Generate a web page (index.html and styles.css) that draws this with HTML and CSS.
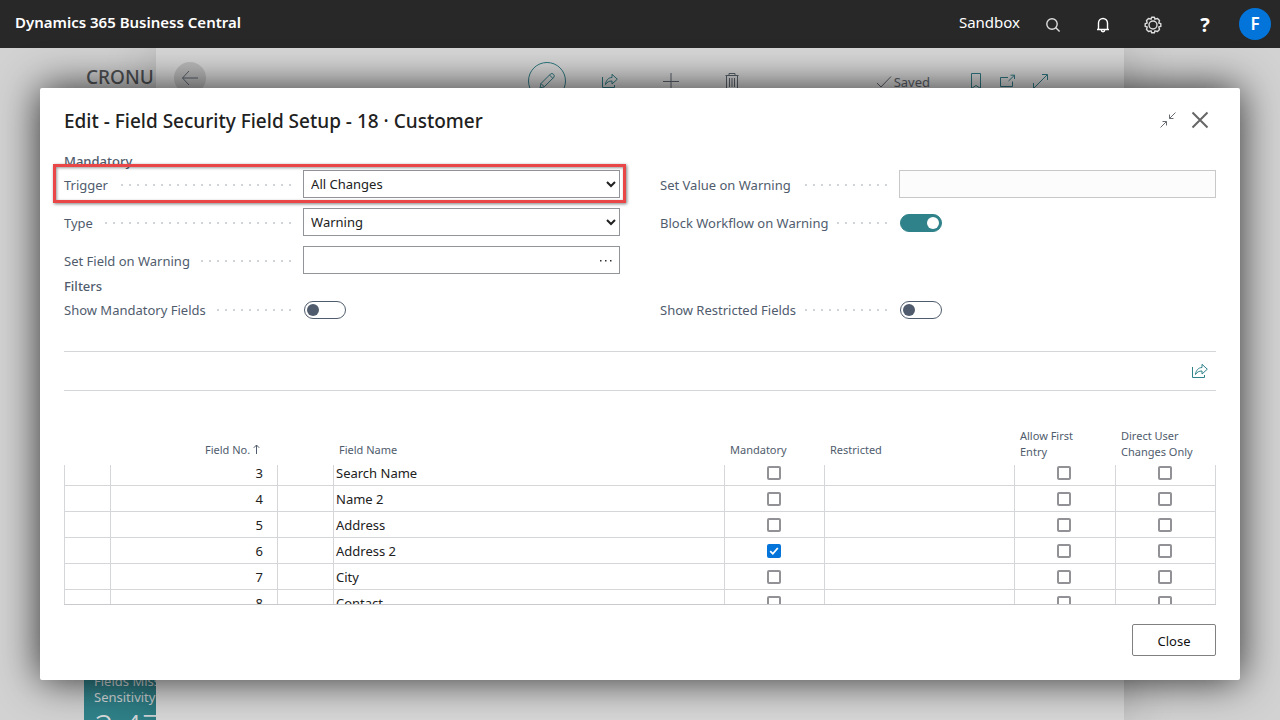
FILE: index.html
```html
<!DOCTYPE html>
<html lang="en">
<head>
<meta charset="utf-8">
<meta name="viewport" content="width=device-width, initial-scale=1">
<title>Dynamics 365 Business Central</title>
<link rel="stylesheet" href="styles.css">
</head>
<body>
<header class="topbar">
  <span class="brand">Dynamics 365 Business Central</span>
  <span class="env">Sandbox</span>
  <nav class="tools">
    <button type="button" aria-label="Search"><svg width="16" height="16" viewBox="0 0 16 16"><circle cx="7" cy="7" r="5.2"/><path d="M10.8 10.8L14.6 14.6"/></svg></button>
    <button type="button" aria-label="Notifications"><svg class="strong" width="16" height="16" viewBox="0 0 16 16"><path d="M3.5 12.2V6a4.5 4.5 0 0 1 9 0v6.200M2 12.500h12M6.300 13a1.700 1.700 0 0 0 3.400 0"/></svg></button>
    <button type="button" aria-label="Settings"><svg width="18" height="18" viewBox="0 0 18 18"><circle cx="9" cy="9" r="4"/><path d="M7.600 1.200H10.400L11 3.200L13.500 2.500L15.500 4.500L14.800 7L16.800 7.600V10.400L14.800 11L15.500 13.500L13.500 15.500L11 14.800L10.400 16.800H7.600L7 14.800L4.500 15.500L2.500 13.500L3.200 11L1.200 10.400V7.600L3.200 7L2.500 4.500L4.500 2.500L7 3.200Z" stroke-linejoin="round"/></svg></button>
    <button type="button" class="help" aria-label="Help">?</button>
  </nav>
  <button type="button" class="avatar" aria-label="Account">F</button>
</header>

<main class="stage">
  <div class="backdrop">
    <aside class="side">
      <div class="company">CRONU</div>
      <div class="tile">
        <div class="tile-label">Fields Miss</div>
        <div class="tile-label">Sensitivity</div>
        <div class="tile-value">2,47</div>
      </div>
    </aside>
    <div class="sheet">
      <div class="sheet-bar">
        <button type="button" class="back" aria-label="Back"><svg width="18" height="16" viewBox="0 0 18 16"><path d="M8 1L1.500 8L8 15M1.500 8H17"/></svg></button>
        <div class="actions">
          <button type="button" class="edit" aria-label="Edit"><svg width="18" height="18" viewBox="0 0 18 18"><path d="M2 16L3 11.500L12.500 2Q14 .8 15.500 2.300T15.800 5.300L6.300 14.800ZM3 11.500L6.300 14.800M11.500 3L14.800 6.300"/></svg></button>
          <button type="button" aria-label="Share"><svg width="18" height="16" viewBox="0 0 18 16"><path d="M1.500 4V14.500H13.500V12M4.500 11.500C5 7 7.500 4.700 11 4.500V1.300L16.300 6.200L11 11V8C8 8 6 9 4.500 11.500Z"/></svg></button>
          <button type="button" class="muted" aria-label="New"><svg width="18" height="16" viewBox="0 0 18 16"><path d="M9 0V16M1 8.500H17"/></svg></button>
          <button type="button" class="muted" aria-label="Delete"><svg width="16" height="18" viewBox="0 0 16 18"><path d="M1.500 3.500H14.500M5 3.500V1.500H11V3.500M2.500 3.500V17.500H13.500V3.500M5.500 6V15M8 6V15M10.500 6V15"/></svg></button>
        </div>
        <div class="state">
          <svg width="16" height="14" viewBox="0 0 16 14"><path d="M1 8L5 12L15 1.500"/></svg><span>Saved</span>
        </div>
        <div class="page-icons">
          <svg width="14" height="18" viewBox="0 0 14 18"><path d="M2.500 1.500H11.500V16.500L7 13.500L2.500 16.500Z"/></svg>
          <svg width="17" height="14" viewBox="0 0 17 14"><path d="M9 3.500H1.500V12.500H13.500V7.500M9.500 7L15.500 1.200M11.500 1.200H15.500V5"/></svg>
          <svg width="17" height="17" viewBox="0 0 17 17"><path d="M2 15L15 2M10 1.500H15.500V7M1.500 10V15.500H7"/></svg>
        </div>
      </div>
    </div>
  </div>

  <section class="dialog" role="dialog" aria-labelledby="dialog-title">
    <div class="dialog-head">
      <h1 id="dialog-title">Edit - Field Security Field Setup - 18 · Customer</h1>
      <button type="button" class="icon-btn" aria-label="Restore size"><svg width="18" height="18" viewBox="0 0 18 18"><path d="M1.500 16.500L7.500 10.500M3.500 10.500H7.500V14.500M16.500 1.500L10.500 7.500M10.500 3.500V7.500H14.500"/></svg></button>
      <button type="button" class="icon-btn close-x" aria-label="Close dialog"><svg width="18" height="18" viewBox="0 0 18 18"><path d="M1.500 1.500L16.500 16.500M16.500 1.500L1.500 16.500"/></svg></button>
    </div>

    <form class="fields">
      <h2>Mandatory</h2>
      <div class="columns">
        <div class="field highlighted"><label for="trigger">Trigger</label><i class="dots"></i><select id="trigger" class="control"><option>All Changes</option></select></div>
        <div class="field"><label for="setvalue">Set Value on Warning</label><i class="dots"></i><input id="setvalue" class="control" type="text" disabled></div>
        <div class="field"><label for="type">Type</label><i class="dots"></i><select id="type" class="control"><option>Warning</option></select></div>
        <div class="field"><label for="block">Block Workflow on Warning</label><i class="dots"></i><div class="slot"><input id="block" class="switch" type="checkbox" role="switch" checked></div></div>
        <div class="field"><label for="setfield">Set Field on Warning</label><i class="dots"></i><div class="control lookup"><input id="setfield" type="text"><button type="button" aria-label="Choose a field"><svg width="14" height="4" viewBox="0 0 14 4"><path d="M1 1h1.500v1.500H1zM6 1h1.500v1.500H6zM11 1h1.500v1.500H11z"/></svg></button></div></div>
      </div>
      <h2 class="filters">Filters</h2>
      <div class="columns">
        <div class="field"><label for="showmand">Show Mandatory Fields</label><i class="dots"></i><div class="slot"><input id="showmand" class="switch" type="checkbox" role="switch"></div></div>
        <div class="field"><label for="showrest">Show Restricted Fields</label><i class="dots"></i><div class="slot"><input id="showrest" class="switch" type="checkbox" role="switch"></div></div>
      </div>
    </form>

    <div class="list-bar">
      <button type="button" class="icon-btn share" aria-label="Share list"><svg width="18" height="16" viewBox="0 0 18 16"><path d="M1.500 4V14.500H13.500V12M4.500 11.500C5 7 7.500 4.700 11 4.500V1.300L16.300 6.200L11 11V8C8 8 6 9 4.500 11.500Z"/></svg></button>
    </div>

    <div class="grid">
      <table>
        <colgroup><col class="c-mark"><col class="c-no"><col class="c-menu"><col><col class="c-mand"><col class="c-rest"><col class="c-allow"><col class="c-direct"></colgroup>
        <thead>
          <tr><th></th><th class="no">Field No. <svg width="7" height="10" viewBox="0 0 7 10"><path d="M3.500 10V1M.8 3.800L3.500 1L6.200 3.800"/></svg></th><th></th><th>Field Name</th><th>Mandatory</th><th>Restricted</th><th class="two-line">Allow First<br>Entry</th><th class="two-line">Direct User<br>Changes Only</th></tr>
        </thead>
        <tbody>
          <tr class="partial"><td></td><td class="no">3</td><td></td><td>Search Name</td><td class="tick"><input type="checkbox" aria-label="Mandatory"></td><td></td><td class="tick"><input type="checkbox" aria-label="Allow first entry"></td><td class="tick"><input type="checkbox" aria-label="Direct user changes only"></td></tr>
          <tr><td></td><td class="no">4</td><td></td><td>Name 2</td><td class="tick"><input type="checkbox" aria-label="Mandatory"></td><td></td><td class="tick"><input type="checkbox" aria-label="Allow first entry"></td><td class="tick"><input type="checkbox" aria-label="Direct user changes only"></td></tr>
          <tr><td></td><td class="no">5</td><td></td><td>Address</td><td class="tick"><input type="checkbox" aria-label="Mandatory"></td><td></td><td class="tick"><input type="checkbox" aria-label="Allow first entry"></td><td class="tick"><input type="checkbox" aria-label="Direct user changes only"></td></tr>
          <tr><td></td><td class="no">6</td><td></td><td>Address 2</td><td class="tick"><input type="checkbox" aria-label="Mandatory" checked></td><td></td><td class="tick"><input type="checkbox" aria-label="Allow first entry"></td><td class="tick"><input type="checkbox" aria-label="Direct user changes only"></td></tr>
          <tr><td></td><td class="no">7</td><td></td><td>City</td><td class="tick"><input type="checkbox" aria-label="Mandatory"></td><td></td><td class="tick"><input type="checkbox" aria-label="Allow first entry"></td><td class="tick"><input type="checkbox" aria-label="Direct user changes only"></td></tr>
          <tr><td></td><td class="no">8</td><td></td><td>Contact</td><td class="tick"><input type="checkbox" aria-label="Mandatory"></td><td></td><td class="tick"><input type="checkbox" aria-label="Allow first entry"></td><td class="tick"><input type="checkbox" aria-label="Direct user changes only"></td></tr>
        </tbody>
      </table>
    </div>

    <footer class="dialog-foot"><button type="button" class="close-btn">Close</button></footer>
  </section>
</main>
</body>
</html>
```
FILE: styles.css
```css
* { box-sizing: border-box; }

body {
  margin: 0;
  height: 100vh;
  display: flex;
  flex-direction: column;
  overflow: hidden;
  font: 13px/20px "Noto Sans", "Open Sans", sans-serif;
  color: #212121;
  background: #d2d2d2;
}

button { font: inherit; color: inherit; border: 0; padding: 0; background: none; cursor: pointer; }
svg { display: block; fill: none; stroke: currentColor; }

/* Top bar */
.topbar {
  display: flex;
  align-items: center;
  height: 48px;
  padding: 0 9px 0 15px;
  color: #fff;
  background: #282828;
}
.brand { flex: 1; font-size: 15px; font-weight: 600; padding-bottom: 4px; }
.env { font-size: 15px; padding-bottom: 4px; margin-right: 8px; }
.tools { display: flex; }
.tools button { width: 50px; height: 48px; display: grid; place-items: center; padding-top: 2px; color: #ddd; }
.tools svg { stroke-width: 1.4; }
.tools .strong { color: #fff; }
.tools .help { width: 54px; color: #fff; font-size: 20px; font-weight: 700; }
.avatar { width: 32px; height: 32px; margin-left: 7px; border-radius: 50%; background: #0375da; color: #fff; font-size: 17px; font-weight: 600; }

/* Page behind the dialog */
.stage { position: relative; flex: 1; min-height: 0; }
.backdrop { height: 100%; display: flex; padding-right: 156px; overflow: hidden; }
.side { width: 156px; padding: 17px 0 0 84px; display: flex; flex-direction: column; justify-content: space-between; overflow: hidden; }
.company { padding-left: 2px; font-size: 19px; line-height: 24px; font-weight: 500; color: #505356; }
.tile { height: 48px; padding: 1px 0 0 10px; background: #30828a; color: #d8dcdd; overflow: hidden; }
.tile-label { line-height: 16px; white-space: nowrap; }
.tile-value { font-size: 35px; line-height: 44px; font-weight: 300; }
.sheet { flex: 1; background: #d7d7d7; box-shadow: 0 0 50px rgba(0, 0, 0, .2); }
.sheet-bar { display: flex; align-items: flex-start; height: 48px; padding: 14px 75px 0 18px; color: #2f7780; }
.back { width: 32px; height: 32px; display: grid; place-items: center; border-radius: 50%; background: #bcbcbc; color: #58636e; }
.actions { flex: 1; display: flex; align-items: center; justify-content: center; gap: 26px; padding-left: 196px; }
.actions button { width: 35px; height: 38px; display: grid; place-items: center; }
.actions .edit { width: 38px; border: 1px solid #2f7780; border-radius: 50%; }
.actions .muted { color: #59616b; }
.state { display: flex; align-items: center; gap: 2px; padding-top: 10px; margin-right: 39px; color: #5a6067; }
.page-icons { display: flex; align-items: center; gap: 16px; padding-top: 10px; }

/* Dialog */
.dialog {
  position: absolute;
  inset: 40px;
  display: flex;
  flex-direction: column;
  padding: 16px 24px 24px;
  background: #fff;
  border-radius: 2px;
  box-shadow: 0 0 40px rgba(0, 0, 0, .8);
}
.dialog-head { display: flex; align-items: center; gap: 14px; height: 32px; }
.dialog-head h1 { flex: 1; margin: 0; padding-top: 2px; font-size: 19px; line-height: 28px; font-weight: 500; }
.icon-btn { width: 18px; height: 28px; color: #6a6e72; }
.close-x { margin-right: 7px; stroke-width: 2; color: #666; }

.fields { padding-top: 16px; color: #505c6d; }
.fields h2 { margin: 0; font-size: 13px; line-height: 18px; font-weight: 500; }
.fields .filters { margin: 3px 0 0; }
.columns { display: grid; grid-template-columns: 1fr 1fr; gap: 10px 40px; }
.field { position: relative; display: flex; align-items: center; height: 28px; }
.field label { padding-top: 2px; }
.dots {
  flex: 1;
  width: 0;
  height: 2px;
  margin: 2px 12px 0 8px;
  background: repeating-linear-gradient(to left, #d0d3d7 0 2px, transparent 2px 8px);
}
.control, .slot { width: 57%; height: 28px; }
.control { margin: 0; padding: 0 3px; border: 1px solid #919499; border-radius: 0; background: #fff; color: #212121; font: inherit; }
.control:disabled { border-color: #c8c8c8; background: #fcfcfc; }
.lookup { display: flex; align-items: center; padding: 2px 6px 0; }
.lookup input { flex: 1; min-width: 0; border: 0; outline: 0; background: none; font: inherit; }
.lookup svg { fill: #303030; stroke: none; }
.slot { display: flex; align-items: center; padding: 2px 0 0 1px; }
.switch { appearance: none; width: 42px; height: 18px; margin: 0; padding: 2px; border: 1px solid #505c6d; border-radius: 9px; display: flex; }
.switch::before { content: ""; width: 12px; height: 12px; border-radius: 50%; background: #505c6d; }
.switch:checked { justify-content: flex-end; background: #2f828a; border-color: #2f828a; }
.switch:checked::before { background: #fff; }
.highlighted::after {
  content: "";
  position: absolute;
  inset: -6px -6px -5px -11px;
  border: 3px solid #e94747;
  box-shadow: 1px 1px 3px rgba(0, 0, 0, .5), inset 1px 1px 3px rgba(0, 0, 0, .4);
  pointer-events: none;
}

/* List part */
.list-bar { display: flex; justify-content: flex-end; align-items: center; height: 40px; margin-top: 28px; padding-right: 7px; border: solid #d4d6da; border-width: 1px 0; }
.share { color: #2f828a; height: 16px; }
.grid { flex: 1; min-height: 0; margin-top: 33px; overflow: hidden; border-bottom: 1px solid #c8cacd; }
table { width: 100%; table-layout: fixed; border-collapse: separate; border-spacing: 0; }
.c-mark { width: 46px; }
.c-no { width: 167px; }
.c-menu { width: 56px; }
.c-mand { width: 100px; }
.c-rest { width: 190px; }
.c-allow { width: 101px; }
.c-direct { width: 101px; }
th { height: 41px; padding: 4px 6px 7px; vertical-align: bottom; text-align: left; font-size: 11px; line-height: 16px; font-weight: 400; color: #505c6d; }
th.two-line { padding-bottom: 5px; }
th.no { padding-right: 17px; text-align: right; }
th svg { display: inline-block; }
td { height: 26px; padding: 0 2px; line-height: 18px; border: solid #d4d6da; border-width: 0 0 1px 1px; }
td:last-child { border-right-width: 1px; }
td.no { padding-right: 14px; text-align: right; }
td.tick { padding-right: 4px; text-align: center; line-height: 0; }
.partial td { height: 21px; padding-bottom: 5px; line-height: 14px; }
.partial td.tick { line-height: 0; }
.tick input {
  appearance: none;
  width: 14px;
  height: 14px;
  margin: 0;
  border: 2px solid #919196;
  border-radius: 2px;
  background: #fff;
  vertical-align: middle;
}
.tick input:checked {
  border-color: #0375da;
  background: #0375da url("data:image/svg+xml,%3Csvg xmlns='http://www.w3.org/2000/svg' viewBox='0 0 10 10'%3E%3Cpath d='M1.200 5.200L3.800 7.800L8.800 2' fill='none' stroke='white' stroke-width='1.800'/%3E%3C/svg%3E") center / 10px 10px no-repeat;
}

.dialog-foot { display: flex; justify-content: flex-end; padding-top: 19px; }
.close-btn { width: 84px; height: 32px; padding-top: 2px; border: 1px solid #808080; border-radius: 2px; color: #111; }
```
